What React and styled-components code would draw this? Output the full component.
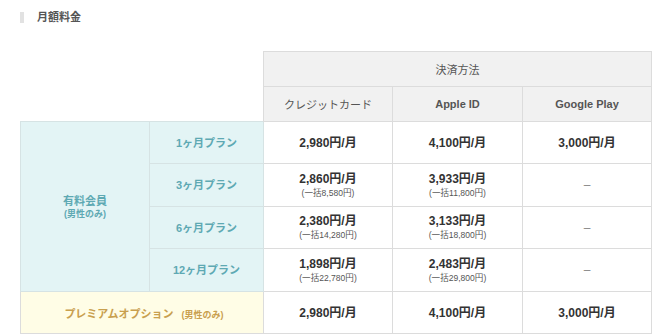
import React from "react";
import styled, { createGlobalStyle } from "styled-components";

const Global = createGlobalStyle`
  html, body { margin: 0; padding: 0; background: #fff; }
  body { font-family: "Liberation Sans", Arial, "Noto Sans CJK JP", sans-serif; color: #444; }
`;

const Page = styled.div`
  padding: 12px 4px 0 20px;
  width: 655px;
  box-sizing: border-box;
`;

const Title = styled.h2`
  margin: 0;
  display: flex;
  align-items: center;
  gap: 13px;
  height: 11px;
  font-size: 11px;
  font-weight: bold;
  color: #555;
  line-height: 11px;
  &::before {
    content: "";
    display: block;
    width: 4px;
    height: 11px;
    background: #e2e2e2;
  }
`;

const Table = styled.table`
  margin-top: 28px;
  width: 631px;
  border-collapse: collapse;
  table-layout: fixed;
  font-size: 11px;
`;

const HeadRow = styled.tr`
  height: 35px;
`;

const BodyRow = styled.tr`
  height: ${(p) => p.$h}px;
`;

const Corner = styled.td`
  border: none;
  background: #fff;
`;

const Th = styled.th`
  border: 1px solid #dcdcdc;
  background: #f1f1f1;
  color: #555;
  font-weight: ${(p) => (p.$bold ? "bold" : "normal")};
  font-size: 11px;
  text-align: center;
  vertical-align: middle;
  padding: 0;
`;

const Member = styled.th`
  border: 1px solid #d6e3e4;
  background: #e3f4f5;
  color: #5ea9b3;
  font-weight: bold;
  font-size: 11px;
  text-align: center;
  vertical-align: middle;
  padding: 0;
  line-height: 14px;
`;

const Small = styled.span`
  display: block;
  font-size: 9px;
  line-height: 12px;
`;

const Plan = styled(Member)``;

const Premium = styled.th`
  border: 1px solid #dcdcdc;
  background: #fffde6;
  color: #c9a04e;
  font-weight: bold;
  font-size: 11px;
  text-align: center;
  vertical-align: middle;
  padding: 0 0 0 4px;
`;

const PremiumNote = styled.span`
  font-size: 9px;
  margin-left: 8px;
`;

const Td = styled.td`
  border: 1px solid #dcdcdc;
  background: #fff;
  text-align: center;
  vertical-align: middle;
  padding: 0;
`;

const Price = styled.div`
  font-size: 12px;
  font-weight: bold;
  color: #333;
  line-height: 16px;
`;

const Lump = styled.div`
  font-size: 9px;
  color: #555;
  line-height: 13px;
  transform: scale(0.95);
`;

const Dash = styled.div`
  color: #888;
  font-size: 12px;
`;

const plans = [
  { name: "1ヶ月プラン", h: 42, cc: ["2,980円/月"], ap: ["4,100円/月"], gp: "3,000円/月" },
  { name: "3ヶ月プラン", h: 43, cc: ["2,860円/月", "(一括8,580円)"], ap: ["3,933円/月", "(一括11,800円)"], gp: null },
  { name: "6ヶ月プラン", h: 42, cc: ["2,380円/月", "(一括14,280円)"], ap: ["3,133円/月", "(一括18,800円)"], gp: null },
  { name: "12ヶ月プラン", h: 43, cc: ["1,898円/月", "(一括22,780円)"], ap: ["2,483円/月", "(一括29,800円)"], gp: null },
];

function Cell({ v }) {
  return (
    <Td>
      <Price>{v[0]}</Price>
      {v[1] && <Lump>{v[1]}</Lump>}
    </Td>
  );
}

export default function App() {
  return (
    <>
      <Global />
      <Page>
        <Title>月額料金</Title>
        <Table>
          <colgroup>
            <col style={{ width: 129 }} />
            <col style={{ width: 114 }} />
            <col style={{ width: 129 }} />
            <col style={{ width: 130 }} />
            <col style={{ width: 129 }} />
          </colgroup>
          <tbody>
            <HeadRow>
              <Corner colSpan={2} rowSpan={2} />
              <Th colSpan={3}>決済方法</Th>
            </HeadRow>
            <HeadRow>
              <Th>クレジットカード</Th>
              <Th $bold>Apple ID</Th>
              <Th $bold>Google Play</Th>
            </HeadRow>
            {plans.map((p, i) => (
              <BodyRow key={p.name} $h={p.h}>
                {i === 0 && (
                  <Member rowSpan={4}>
                    有料会員
                    <Small>(男性のみ)</Small>
                  </Member>
                )}
                <Plan>{p.name}</Plan>
                <Cell v={p.cc} />
                <Cell v={p.ap} />
                {p.gp ? (
                  <Cell v={[p.gp]} />
                ) : (
                  <Td>
                    <Dash>–</Dash>
                  </Td>
                )}
              </BodyRow>
            ))}
            <BodyRow $h={42}>
              <Premium colSpan={2}>
                プレミアムオプション<PremiumNote>(男性のみ)</PremiumNote>
              </Premium>
              <Cell v={["2,980円/月"]} />
              <Cell v={["4,100円/月"]} />
              <Cell v={["3,000円/月"]} />
            </BodyRow>
          </tbody>
        </Table>
      </Page>
    </>
  );
}
